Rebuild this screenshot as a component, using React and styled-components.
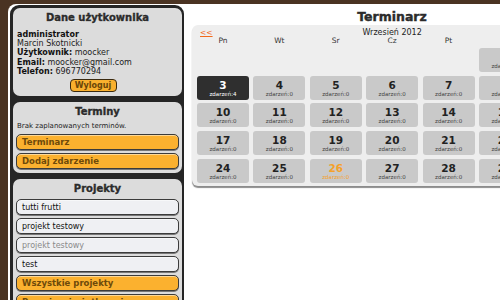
import styled, { createGlobalStyle } from 'styled-components';

const GlobalStyle = createGlobalStyle`
  html, body {
    margin: 0;
    padding: 0;
    background: #4a3322;
    overflow: hidden;
  }
  body {
    font-family: "DejaVu Sans", Verdana, sans-serif;
    color: #111;
  }
`;

const Page = styled.div`
  margin: 4px 0 0 8px;
  padding: 1px 0 0 2px;
  width: 720px;
  height: 300px;
  background: #ffffff;
  border-top-left-radius: 8px;
  display: flex;
  align-items: flex-start;
`;

const Sidebar = styled.aside`
  width: 169px;
  height: 300px;
  padding: 3px 2px 0 3px;
  background: #252525;
  border-radius: 9px 9px 0 0;
  display: flex;
  flex-direction: column;
  gap: 6px;
`;

const Panel = styled.section`
  background: #dcdcdc;
  border-radius: 7px;
  padding: 3px 3px 4px 3px;
  display: flex;
  flex-direction: column;
  gap: 3px;
`;

const PanelTitle = styled.h2`
  margin: 0;
  font-size: 10px;
  font-weight: bold;
  line-height: 14px;
  text-align: center;
  color: #2b2b2b;
  -webkit-text-stroke: 0.35px #2b2b2b;
  text-shadow: 0 1px 0 #f4f4f4;
`;

const Info = styled.div`
  padding: 2px 0 0 1px;
  font-size: 8px;
  line-height: 9.2px;
  color: #222;
`;

const Strong = styled.b`
  font-weight: bold;
  color: #111;
`;

const Note = styled.div`
  padding-left: 1px;
  font-size: 7px;
  line-height: 9px;
  color: #222;
`;

const LogoutRow = styled.div`
  display: flex;
  justify-content: center;
  padding-right: 9px;
`;

const LogoutButton = styled.button`
  width: 47px;
  height: 13px;
  padding: 0;
  background: #f9b02e;
  border: 1px solid #3a2a10;
  border-radius: 4px;
  font-family: inherit;
  font-size: 8px;
  font-weight: bold;
  line-height: 11px;
  color: #6a4608;
`;

const ListItem = styled.div`
  height: 16px;
  box-sizing: border-box;
  padding: 0 5px;
  display: flex;
  align-items: center;
  border: 1px solid #3b3b3b;
  border-radius: 5px;
  box-shadow: inset 0 1px 0 rgba(255, 255, 255, 0.5), 0 1px 0 #777;
  background: ${(p) => (p.$action ? '#fbb12f' : '#eff0f3')};
  font-size: ${(p) => (p.$action ? '8.5px' : '8px')};
  font-weight: ${(p) => (p.$action ? 'bold' : 'normal')};
  color: ${(p) => (p.$action ? '#6e4a0a' : p.$muted ? '#8a8a8a' : '#111')};
  white-space: nowrap;
  overflow: hidden;
`;

const Main = styled.main`
  margin-left: 8px;
  width: 400px;
  display: flex;
  flex-direction: column;
`;

const Title = styled.h1`
  margin: 0;
  height: 20px;
  box-sizing: border-box;
  padding-top: 4px;
  font-size: 12.5px;
  line-height: 16px;
  font-weight: bold;
  text-align: center;
  color: #2b2b2b;
  -webkit-text-stroke: 0.4px #2b2b2b;
`;

const Calendar = styled.div`
  background: #eeeeee;
  border-radius: 6px;
  box-shadow: 0 2px 1px #8c8c8c;
  padding: 3px 5px 3px 5px;
`;

const Grid = styled.div`
  display: grid;
  grid-template-columns: repeat(7, 52px);
  column-gap: 4.4px;
  row-gap: 3.8px;
`;

const NavRow = styled.div`
  display: grid;
  grid-template-columns: repeat(7, 52px);
  column-gap: 4.4px;
  height: 8px;
  font-size: 8px;
  line-height: 9px;
`;

const Prev = styled.span`
  color: #f26a1b;
  font-size: 7.5px;
  padding-left: 3px;
  text-decoration: underline;
  text-decoration-thickness: 1px;
`;

const Month = styled.span`
  grid-column: 3 / 6;
  text-align: center;
  color: #222;
`;

const DayName = styled.div`
  height: 8px;
  font-size: 7.5px;
  line-height: 10px;
  text-align: center;
  color: #333;
`;

const Cell = styled.div`
  height: 24px;
  border-radius: 3px;
  background: ${(p) => (p.$active ? '#2f2f2f' : '#c9c9c9')};
  color: ${(p) => (p.$active ? '#fff' : p.$today ? '#f4a12b' : '#222')};
  display: flex;
  flex-direction: column;
  align-items: center;
  padding-top: 3px;
  box-sizing: border-box;
`;

const Empty = styled.div`
  height: 24px;
`;

const Num = styled.span`
  font-size: 10.5px;
  font-weight: bold;
  line-height: 12px;
`;

const Count = styled.span`
  font-size: 5.5px;
  line-height: 7px;
  color: ${(p) => (p.$active ? '#fff' : p.$today ? '#f4a12b' : '#444')};
`;

const days = ['Pn', 'Wt', 'Sr', 'Cz', 'Pt', 'So', 'N'];

const cells = [null, null, null, null, null];
for (let d = 1; d <= 30; d++) cells.push(d);

const projects = [
  { name: 'tutti frutti' },
  { name: 'projekt testowy' },
  { name: 'projekt testowy', muted: true },
  { name: 'test' },
];

export default function App() {
  return (
    <>
      <GlobalStyle />
      <Page>
        <Sidebar>
          <Panel>
            <PanelTitle>Dane użytkownika</PanelTitle>
            <Info>
              <Strong>administrator</Strong>
              <br />
              Marcin Skotnicki
              <br />
              <Strong>Użytkownik:</Strong> moocker
              <br />
              <Strong>Email:</Strong> moocker@gmail.com
              <br />
              <Strong>Telefon:</Strong> 696770294
            </Info>
            <LogoutRow>
              <LogoutButton>Wyloguj</LogoutButton>
            </LogoutRow>
          </Panel>
          <Panel>
            <PanelTitle>Terminy</PanelTitle>
            <Note>Brak zaplanowanych terminów.</Note>
            <ListItem $action>Terminarz</ListItem>
            <ListItem $action>Dodaj zdarzenie</ListItem>
          </Panel>
          <Panel>
            <PanelTitle>Projekty</PanelTitle>
            {projects.map((p, i) => (
              <ListItem key={i} $muted={p.muted}>
                {p.name}
              </ListItem>
            ))}
            <ListItem $action>Wszystkie projekty</ListItem>
            <ListItem $action>Przypisani użytkownicy</ListItem>
          </Panel>
        </Sidebar>
        <Main>
          <Title>Terminarz</Title>
          <Calendar>
            <NavRow>
              <Prev>&lt;&lt;</Prev>
              <Month>Wrzesień 2012</Month>
            </NavRow>
            <Grid>
              {days.map((d) => (
                <DayName key={d}>{d}</DayName>
              ))}
              {cells.map((d, i) =>
                d === null ? (
                  <Empty key={i} />
                ) : (
                  <Cell key={i} $active={d === 3} $today={d === 26}>
                    <Num>{d}</Num>
                    <Count $active={d === 3} $today={d === 26}>
                      zdarzeń:{d === 3 ? 4 : 0}
                    </Count>
                  </Cell>
                )
              )}
            </Grid>
          </Calendar>
        </Main>
      </Page>
    </>
  );
}
